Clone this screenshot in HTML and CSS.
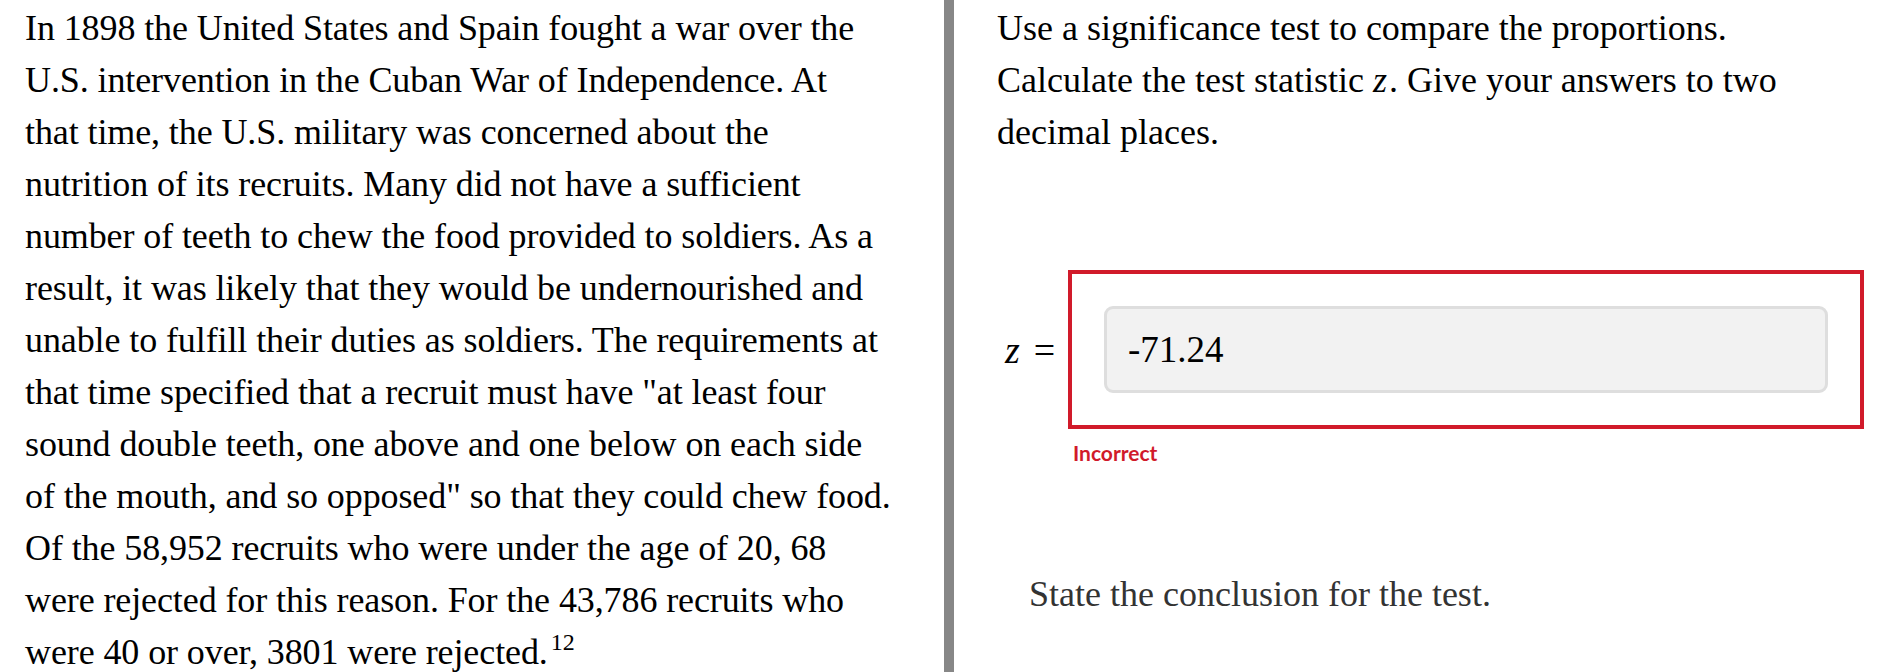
FILE: index.html
```html
<!DOCTYPE html>
<html lang="en">
<head>
<meta charset="utf-8">
<title>Significance test</title>
<link rel="stylesheet" href="styles.css">
</head>
<body>
<div class="page">
  <section class="left">
    <p class="passage">In 1898 the United States and Spain fought a war over the<br>
U.S. intervention in the Cuban War of Independence. At<br>
that time, the U.S. military was concerned about the<br>
nutrition of its recruits. Many did not have a sufficient<br>
number of teeth to chew the food provided to soldiers. As a<br>
result, it was likely that they would be undernourished and<br>
unable to fulfill their duties as soldiers. The requirements at<br>
that time specified that a recruit must have "at least four<br>
sound double teeth, one above and one below on each side<br>
of the mouth, and so opposed" so that they could chew food.<br>
Of the 58,952 recruits who were under the age of 20, 68<br>
were rejected for this reason. For the 43,786 recruits who<br>
were 40 or over, 3801 were rejected.<sup class="ref">12</sup></p>
  </section>
  <div class="divider"></div>
  <section class="right">
    <p class="prompt">Use a significance test to compare the proportions.<br>Calculate the test statistic <i class="var">z</i>. Give your answers to two decimal places.</p>
    <div class="answer-row">
      <span class="label"><i class="var">z</i><span class="eq">=</span></span>
      <div class="answer">
        <div class="answer-box">
          <div class="input">-71.24</div>
        </div>
        <div class="feedback">Incorrect</div>
      </div>
    </div>
    <p class="next">State the conclusion for the test.</p>
  </section>
</div>
</body>
</html>
```
FILE: styles.css
```css
html, body {
  margin: 0;
  padding: 0;
  background: #ffffff;
}
body {
  font-family: "Liberation Serif", "Times New Roman", serif;
  font-size: 36px;
  line-height: 52px;
  color: #000000;
}
.page {
  display: flex;
  align-items: stretch;
  height: 672px;
  overflow: hidden;
}
.left {
  width: 944px;
  padding: 2px 0 0 25px;
  box-sizing: border-box;
  flex: none;
}
.passage {
  margin: 0;
  letter-spacing: -0.1px;
  white-space: nowrap;
}
.ref {
  font-size: 24px;
  line-height: 0;
  vertical-align: 14px;
  margin-left: 3px;
  letter-spacing: 0;
}
.divider {
  width: 10px;
  flex: none;
  background: #878787;
}
.right {
  flex: 1;
  padding: 2px 24px 0 43px;
}
.prompt {
  margin: 0;
}
.var {
  font-style: italic;
  padding-right: 2px;
}
.answer-row {
  display: flex;
  align-items: flex-start;
  margin-top: 112px;
  padding-left: 8px;
}
.label {
  display: flex;
  align-items: center;
  height: 159px;
  width: 63px;
  flex: none;
  font-size: 38px;
}
.label .eq {
  margin-left: 12px;
  font-style: normal;
}
.answer-box {
  width: 796px;
  box-sizing: border-box;
  border: 4px solid #d11a2a;
  padding: 32px;
}
.input {
  height: 87px;
  box-sizing: border-box;
  border: 3px solid #dedede;
  border-radius: 9px;
  background: #f2f2f2;
  padding: 0 21px;
  display: flex;
  align-items: center;
  font-size: 37px;
}
.feedback {
  font-family: Lato, "Open Sans", sans-serif;
  font-weight: 700;
  font-size: 21px;
  line-height: 28px;
  color: #d11a2a;
  margin-top: 10px;
  padding-left: 5px;
}
.next {
  margin: 101px 0 0 32px;
  color: #333333;
}
```
